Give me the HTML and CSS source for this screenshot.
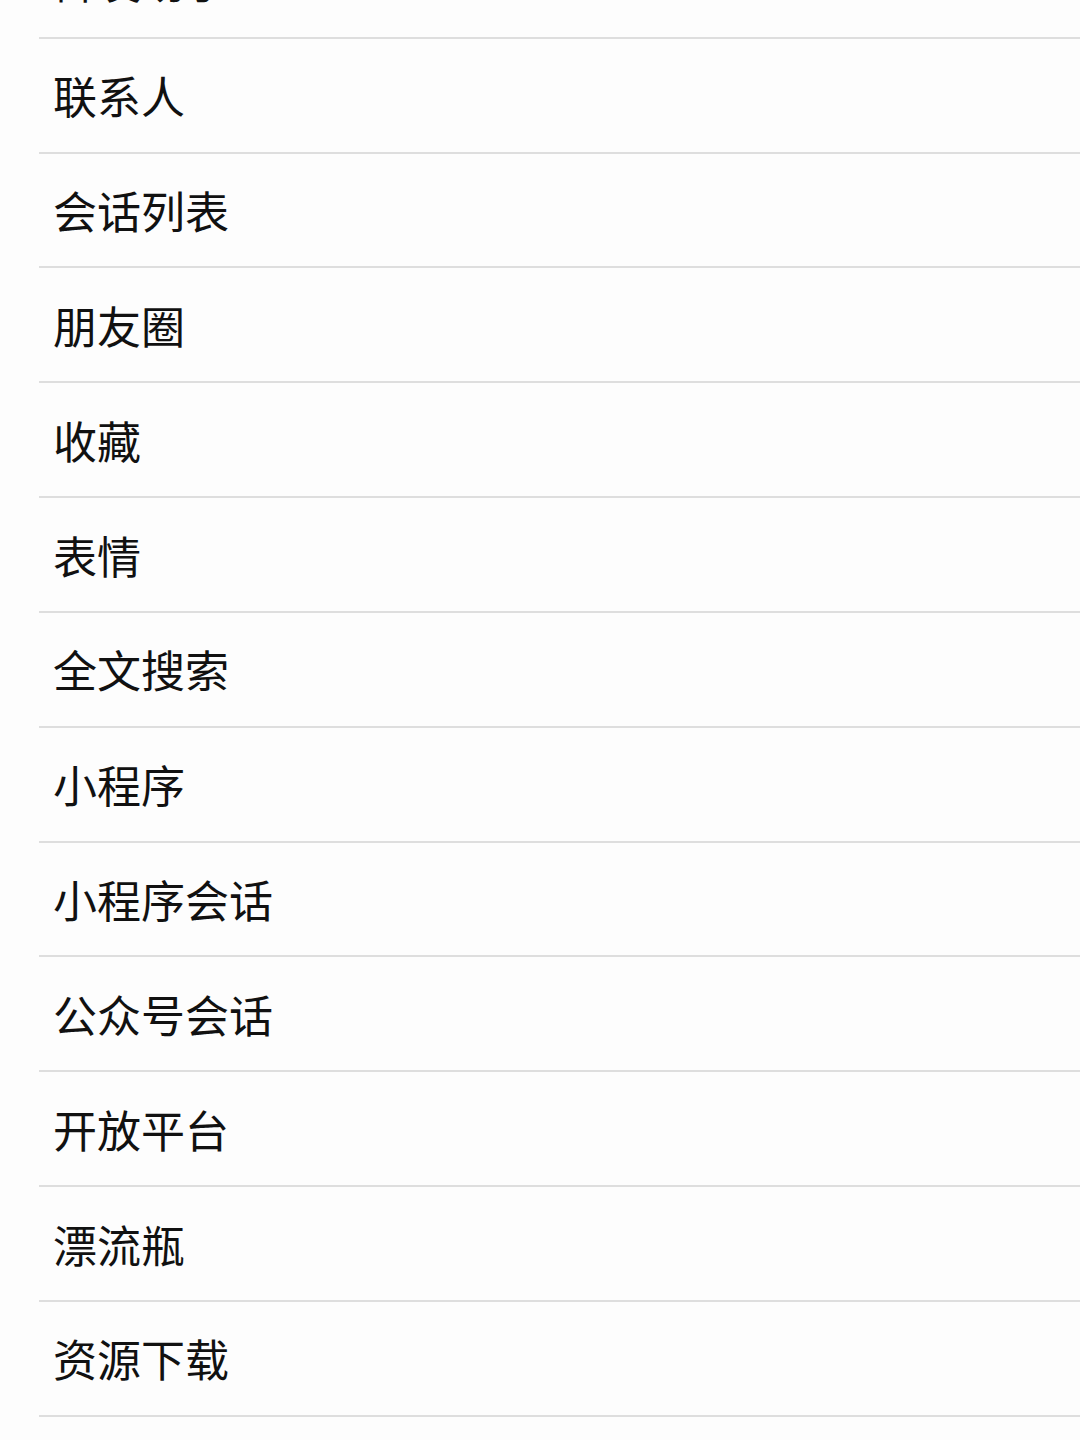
FILE: index.html
```html
<!DOCTYPE html>
<html lang="zh-CN">
<head>
    <meta charset="UTF-8">
    <meta name="viewport" content="width=device-width, initial-scale=1.0">
    <title>功能列表</title>
    <link rel="stylesheet" href="styles.css">
</head>
<body>
    <ul class="menu-list">
        <li class="menu-item">群发助手</li>
        <li class="menu-item">联系人</li>
        <li class="menu-item">会话列表</li>
        <li class="menu-item">朋友圈</li>
        <li class="menu-item">收藏</li>
        <li class="menu-item">表情</li>
        <li class="menu-item">全文搜索</li>
        <li class="menu-item">小程序</li>
        <li class="menu-item">小程序会话</li>
        <li class="menu-item">公众号会话</li>
        <li class="menu-item">开放平台</li>
        <li class="menu-item">漂流瓶</li>
        <li class="menu-item">资源下载</li>
    </ul>
</body>
</html>
```

FILE: styles.css
```css
:root {
    --bg-color: #fdfdfd;
    --text-color: #111111;
    --line-color: #dedede;
    --row-height: 114.83px;
}

* {
    margin: 0;
    padding: 0;
    box-sizing: border-box;
}

html, body {
    height: 100%;
    overflow: hidden;
}

body {
    background-color: var(--bg-color);
    color: var(--text-color);
    font-family: "Noto Sans CJK SC", "Noto Sans", sans-serif;
}

.menu-list {
    list-style: none;
    margin-top: -76px;
    padding-left: 39px;
}

.menu-item {
    height: var(--row-height);
    display: flex;
    align-items: center;
    padding-left: 14px;
    font-size: 44px;
    line-height: 1;
    border-bottom: 2px solid var(--line-color);
}
```
